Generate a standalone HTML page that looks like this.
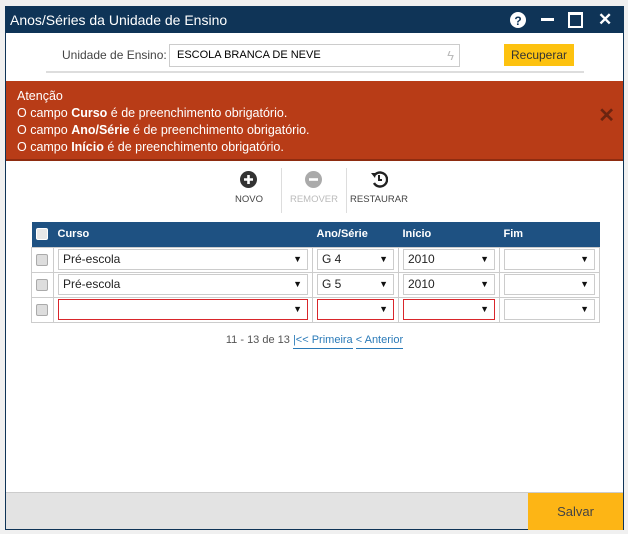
<!DOCTYPE html>
<html><head><meta charset="utf-8"><style>
*{box-sizing:border-box;margin:0;padding:0}
body{width:628px;height:534px;background:#f0f0f0;font-family:"Liberation Sans",sans-serif;position:relative;overflow:hidden}
.win{position:absolute;left:5px;top:6px;width:619px;height:524px;border:1px solid #0f3457;background:#fff}
.title{position:absolute;left:0;top:0;width:617px;height:26px;background:#0f3457;color:#fff;font-size:14px;line-height:26px;padding-left:4px}
.abs{position:absolute}
.lbl{font-size:12px;color:#444}
.inp{left:163px;top:37px;width:291px;height:23px;border:1px solid #ccc;font-size:11px;line-height:21px;padding-left:7px;color:#000}
.btn{left:498px;top:37px;width:70px;height:22px;background:#fdc20f;font-size:12px;line-height:22px;text-align:center;color:#333}
.sep{left:40px;top:64px;width:538px;height:2px;background:#ddd}
.alert{left:0;top:74px;width:617px;height:80px;background:#b83c17;color:#fff;font-size:12.5px;line-height:17px;padding:7px 0 0 11px;border-bottom:2px solid #8e2c10}
.tb{font-size:9.5px;color:#444;text-align:center;width:60px}
.vs{width:1px;height:45px;background:#ddd;top:161px}
table{position:absolute;left:25px;top:215px;width:569px;border-collapse:collapse;font-size:12px}
th{background:#1e5182;color:#fff;text-align:left;height:25px;font-size:11px;font-weight:bold;padding-left:4px}
td{border:1px solid #ccc;height:25px;padding:0 4px}
.cb{display:inline-block;width:12px;height:12px;border:1px solid #aaa;border-radius:2px;background:#ddd;vertical-align:middle}
th .cb{background:#e8e8e8;border-color:#fff}
.sel{height:21px;border:1px solid #ccc;position:relative;font-size:12px;line-height:19px;padding-left:4px;color:#222}
.sel.r{border-color:#d9262b}
.sel:after{content:"▼";position:absolute;right:5px;top:0;font-size:9px;color:#111}
.pg{left:0;width:617px;top:327px;text-align:center;font-size:11px;color:#555}
.pg a{color:#2a7ab8;text-decoration:none;border-bottom:1px solid #2a7ab8;padding-bottom:2px}
.foot{left:0;top:485px;width:617px;height:37px;background:#e3e3e3;border-top:1px solid #ccc}
.save{right:0;top:0;width:95px;height:37px;background:#fdb515;color:#444;font-size:13px;line-height:38px;text-align:center}
</style></head><body>
<div class="win">
<div class="title">Anos/Séries da Unidade de Ensino
<svg class="abs" style="left:504px;top:5px" width="16" height="16"><circle cx="8" cy="8" r="8" fill="#fff"/><text x="8" y="13" text-anchor="middle" font-size="12" font-weight="bold" fill="#0f3457" font-family="Liberation Sans">?</text></svg>
<div class="abs" style="left:535px;top:11px;width:13px;height:3px;background:#fff"></div>
<div class="abs" style="left:562px;top:5px;width:15px;height:16px;border:2px solid #fff;border-top-width:3px"></div>
<div class="abs" style="left:592px;top:0;font-size:17px;font-weight:bold">✕</div>
</div>
<div class="abs lbl" style="left:56px;top:41px">Unidade de Ensino:</div>
<div class="abs inp">ESCOLA BRANCA DE NEVE<span class="abs" style="right:5px;top:0;color:#bbb;font-size:13px">ϟ</span></div>
<div class="abs btn">Recuperar</div>
<div class="abs sep"></div>
<div class="abs alert">Atenção<br>O campo <b>Curso</b> é de preenchimento obrigatório.<br>O campo <b>Ano/Série</b> é de preenchimento obrigatório.<br>O campo <b>Início</b> é de preenchimento obrigatório.
<div class="abs" style="right:8px;top:27px;color:#6b2410;font-size:20px;font-weight:bold">✕</div></div>
<svg class="abs" style="left:234px;top:164px" width="17" height="17"><circle cx="8.5" cy="8.5" r="8.5" fill="#333"/><path d="M8.5 4v9M4 8.5h9" stroke="#fff" stroke-width="2.6"/></svg>
<div class="abs tb" style="left:213px;top:187px">NOVO</div>
<div class="abs vs" style="left:275px"></div>
<svg class="abs" style="left:299px;top:164px" width="17" height="17"><circle cx="8.5" cy="8.5" r="8.5" fill="#aaa"/><path d="M4 8.5h9" stroke="#fff" stroke-width="2.6"/></svg>
<div class="abs tb" style="left:278px;top:187px;color:#bbb">REMOVER</div>
<div class="abs vs" style="left:340px"></div>
<svg class="abs" style="left:364px;top:163px" width="18" height="18"><path d="M4 6A7 7 0 1 1 4 13" fill="none" stroke="#222" stroke-width="2.4"/><path d="M1 3l5 0-1 5z" fill="#222"/><path d="M9 5v5h3" fill="none" stroke="#222" stroke-width="2"/></svg>
<div class="abs tb" style="left:343px;top:187px">RESTAURAR</div>
<table>
<tr><th style="width:22px"><span class="cb"></span></th><th style="width:259px">Curso</th><th style="width:86px">Ano/Série</th><th style="width:101px">Início</th><th>Fim</th></tr>
<tr><td><span class="cb"></span></td><td><div class="sel">Pré-escola</div></td><td><div class="sel">G 4</div></td><td><div class="sel">2010</div></td><td><div class="sel"></div></td></tr>
<tr><td><span class="cb"></span></td><td><div class="sel">Pré-escola</div></td><td><div class="sel">G 5</div></td><td><div class="sel">2010</div></td><td><div class="sel"></div></td></tr>
<tr><td><span class="cb"></span></td><td><div class="sel r"></div></td><td><div class="sel r"></div></td><td><div class="sel r"></div></td><td><div class="sel"></div></td></tr>
</table>
<div class="abs pg">11 - 13 de 13 <a>|&lt;&lt; Primeira</a> <a>&lt; Anterior</a></div>
<div class="abs foot"><div class="abs save">Salvar</div></div>
</div>
</body></html>
